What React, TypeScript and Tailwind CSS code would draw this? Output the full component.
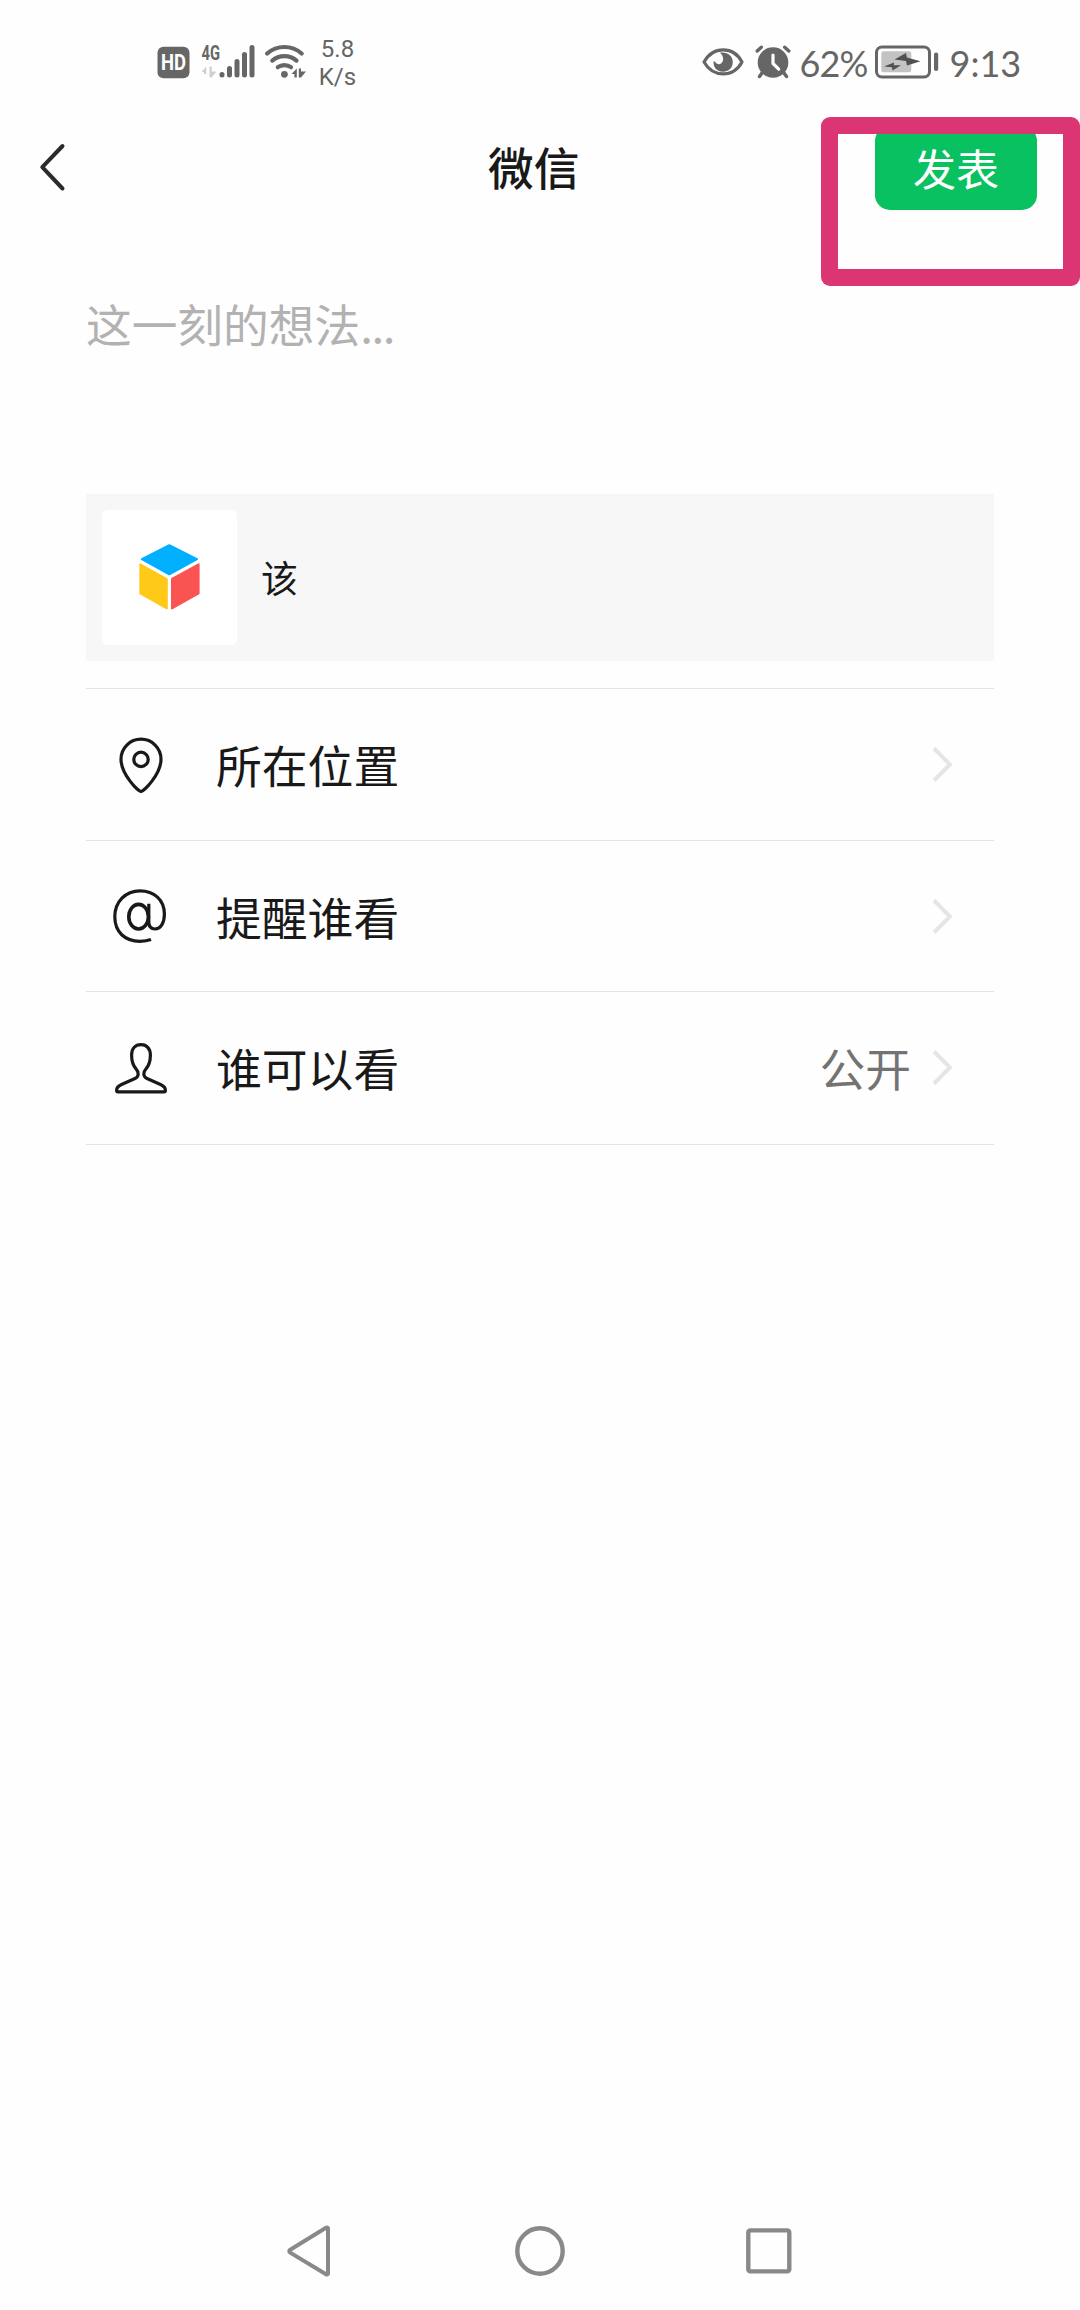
import React from 'react';

const Signal = () => (
    <svg className="w-[54px] h-[46px]" viewBox="0 -10 54 46" fill="none">
        <text x="0.5" y="17" fontFamily="Roboto" fontWeight="700" fontSize="21" textLength="18.5" lengthAdjust="spacingAndGlyphs" fill="#666">4G</text>
        <path d="M5.2 34.5V23.5L0.5 29H3V31H5.2ZM8.5 34.5V23.5H10.7V28.5H15.5L10.5 34.5Z" fill="#cfcfcf" />
        <g stroke="#666" strokeWidth="5" strokeLinecap="round">
            <path d="M21 32V31.5M28.5 32V25.5M36 32V18.5M43.5 32V11.5M51 32V4.5" />
        </g>
    </svg>
);

const Wifi = () => (
    <svg className="w-[42px] h-[36px]" viewBox="0 0 42 36" fill="none">
        <g stroke="#666" strokeWidth="4.2" strokeLinecap="round">
            <path d="M2.2 10.5C12 1.8 26.8 1.8 36.6 10.5" />
            <path d="M7.3 17.6C14.2 11.5 24.6 11.5 31.5 17.6" />
            <path d="M12.8 24.2C16.5 21.3 22.3 21.3 26 24.2" />
        </g>
        <circle cx="19.4" cy="31.3" r="3.4" fill="#666" />
        <path d="M26.5 31L31.8 25.5V34.5H29.4V31ZM33.8 34.5V25.5H36V28.5H41L36 34.5Z" fill="#666" />
    </svg>
);

const Eye = () => (
    <svg className="w-[42px] h-[28px]" viewBox="0 0 42 28" fill="none">
        <path d="M2 14C11 -2.3 31.5 -2.3 40 14C31.5 29.8 11 29.8 2 14Z" stroke="#666" strokeWidth="3.2" strokeLinejoin="round" />
        <path d="M18 4.8C25 3.6 30.8 8 30.8 14C30.8 19.8 26.5 23.8 21 23.8C15.2 23.8 11.2 19.5 11.5 13.8C12.2 13 12.8 13.3 13.2 14C15 17.3 20 16.8 21 12.5C21.6 9.5 20.5 7 18 4.8Z" fill="#666" />
    </svg>
);

const Alarm = () => (
    <svg className="w-[36px] h-[34px]" viewBox="0 0 36 34" fill="none">
        <circle cx="18" cy="17.5" r="15.3" fill="#666" />
        <path d="M2.2 6L6.3 2.2M33.8 6L29.7 2.2" stroke="#666" strokeWidth="3.4" strokeLinecap="round" />
        <path d="M7 28L4.5 31.5M29 28L31.5 31.5" stroke="#666" strokeWidth="3.4" strokeLinecap="round" />
        <path d="M18 10V18.5L23.7 24.2" stroke="#fefefe" strokeWidth="3.2" strokeLinecap="round" strokeLinejoin="round" />
    </svg>
);

const Battery = () => (
    <svg className="w-[64px] h-[34px]" viewBox="0 0 64 34" fill="none">
        <rect x="1.5" y="2" width="53" height="30" rx="5.5" stroke="#666" strokeWidth="3" />
        <rect x="6.3" y="6.3" width="30" height="21" rx="2.5" fill="#c3c3c3" />
        <path d="M9 21.5L19 17.5L18.8 20.2H26L17.5 25.5L17 22.2Z" fill="#505050" />
        <path d="M19.5 14.4L31 8L31.8 12.5L45.5 16.3L32 20.5L31 16Z" fill="#505050" />
        <rect x="59" y="7.5" width="4.2" height="18.5" rx="2.1" fill="#666" />
    </svg>
);

const StatusBar = () => (
    <div className="flex h-[117px] pl-[157px] text-[#666]">
        <svg className="mt-[46px] w-[33px] h-[33px]" viewBox="0 0 33 33">
            <rect x="0.5" y="0.7" width="32" height="31.5" rx="6" fill="#666" />
            <text x="4" y="24.3" fontFamily="Roboto" fontWeight="700" fontSize="21.5" textLength="25" lengthAdjust="spacingAndGlyphs" fill="#fefefe">HD</text>
        </svg>
        <div className="mt-[33px] ml-[10.5px]"><Signal /></div>
        <div className="mt-[43px] ml-[10px]"><Wifi /></div>
        <div className="mt-[35px] ml-[9px] w-[44px] text-center font-[Roboto,sans-serif] text-[24px] leading-[28px]">
            <div>5.8</div>
            <div>K/s</div>
        </div>
        <div className="mt-[48px] ml-[342px]"><Eye /></div>
        <div className="mt-[45px] ml-[11px]"><Alarm /></div>
        <div className="mt-[41px] ml-[9px] w-[75px] whitespace-nowrap font-[Lato,sans-serif] text-[36px] leading-[44px] tracking-[-0.9px]">62%</div>
        <div className="mt-[45px]"><Battery /></div>
        <div className="mt-[41px] ml-[11px] whitespace-nowrap font-[Lato,sans-serif] text-[36px] leading-[44px]">9:13</div>
    </div>
);

const PinIcon = () => (
    <svg className="w-[60px] h-[60px]" viewBox="0 0 60 60" fill="none" stroke="#191919" strokeWidth="3.2">
        <path d="M31 57.6C28.5 57.6 11 40.5 11 25.2A20 20 0 0 1 51 25.2C51 40.5 33.5 57.6 31 57.6Z" />
        <circle cx="31" cy="25.4" r="7.2" />
    </svg>
);

const AtIcon = () => (
    <svg className="w-[60px] h-[60px]" viewBox="0 0 60 60" fill="none" stroke="#191919" strokeWidth="3.2">
        <ellipse cx="28.6" cy="30.7" rx="9.8" ry="12.3" strokeWidth="3.6" />
        <path d="M38.8 17.8V36C38.8 40.5 41 43 45 43C51 43 54.4 36.5 54.4 28C54.4 14 44 4.8 30 4.8C15.5 4.8 4.8 15.8 4.8 30.8C4.8 46 15 55.3 29.8 55.3C34.5 55.3 38 54.8 41 53.6" />
    </svg>
);

const PersonIcon = () => (
    <svg className="w-[60px] h-[60px]" viewBox="0 0 60 60" fill="none" stroke="#191919" strokeWidth="3.2">
        <path d="M31 7.7C25 7.7 21.6 12 21.6 18C21.6 25 23 28.5 26 31.8C29.3 35.3 28.8 39.8 25 41.5L11.5 47.5C8 49 6.6 50.8 6.6 53.4C6.6 54.5 7.2 54.8 8 54.8H54C54.8 54.8 55.4 54.5 55.4 53.4C55.4 50.8 54 49 50.5 47.5L37 41.5C33.2 39.8 32.7 35.3 36 31.8C39 28.5 40.4 25 40.4 18C40.4 12 37 7.7 31 7.7Z" />
    </svg>
);

const CubeLogo = () => (
    <svg className="w-[135px] h-[135px]" viewBox="0 0 135 135" strokeWidth="2" strokeLinejoin="round">
        <path d="M67.3 35.2L95 49.2L67.3 64.4L39.8 49.2Z" fill="#00b0ff" stroke="#00b0ff" />
        <path d="M38.3 54.3L64.8 69V98.5L38.3 83.3Z" fill="#ffc917" stroke="#ffc917" />
        <path d="M70 69L96.6 54.3V83.3L70 98.5Z" fill="#fa5452" stroke="#fa5452" />
    </svg>
);

type RowProps = {
    icon: React.ReactNode;
    label: string;
    value?: string;
    className: string;
};

const Row: React.FC<RowProps> = ({ icon, label, value, className }) => (
    <div className={`flex border-b border-[#e4e4e4] pl-6 pr-[42px] pt-[45px] ${className}`}>
        {icon}
        <div className="ml-[46px] text-[45.8px] leading-[60px] text-[#191919]">{label}</div>
        <div className="ml-auto text-[45.8px] leading-[60px] text-[#737373]">{value}</div>
        <svg className="ml-[21px] mt-3 w-5 h-[37px]" viewBox="0 0 20 37" fill="none" stroke="#e5e5e5" strokeWidth="4">
            <path d="M2 2.5L18 18.5L2 34.5" />
        </svg>
    </div>
);

export default function App() {
    return (
        <div className="flex h-[2310px] w-[1080px] flex-col overflow-hidden bg-[#fefefe] font-['Noto_Sans_CJK_SC',sans-serif]">
            <StatusBar />

            {/* Title bar */}
            <div className="relative flex h-[169px]">
                <svg className="ml-[38px] mt-[25px] w-[30px] h-[50px]" viewBox="0 0 30 50" fill="none" stroke="#2b2b2b" strokeWidth="4" strokeLinecap="round" strokeLinejoin="round">
                    <path d="M24.5 4L4.3 25.2L24.5 46.5" />
                </svg>
                <h1 className="ml-[420px] mt-[19px] text-[45.7px] font-medium leading-[60px] text-[#191919]">微信</h1>
                <button className="ml-auto mr-[43px] mt-[9px] h-[84px] w-[162px] rounded-[15px] bg-[#09c160] text-[43px] leading-[82px] text-white pb-[2px]">发表</button>
                <div className="absolute right-0 top-0 h-[169px] w-[259px] rounded-[9px] bg-[#dc3574] [clip-path:polygon(evenodd,0_0,100%_0,100%_100%,0_100%,0_0,17px_17px,242px_17px,242px_152px,17px_152px,17px_17px)]" />
            </div>

            <div className="px-[86px]">
                <div className="h-[208px] pt-[7px] text-[45.7px] leading-[60px] text-[#b2b2b2]">
                    这一刻的想法<span className="tracking-[-1.4px]">...</span>
                </div>

                {/* Shared link */}
                <div className="flex h-[167px] items-center bg-[#f7f7f7] pl-4">
                    <div className="rounded-md bg-white"><CubeLogo /></div>
                    <div className="ml-6 text-[37px] leading-none text-[#191919]">该</div>
                </div>

                <div className="mt-[27px] border-t border-[#e4e4e4]">
                    <Row className="h-[152px]" icon={<PinIcon />} label="所在位置" />
                    <Row className="h-[151px]" icon={<AtIcon />} label="提醒谁看" />
                    <Row className="h-[153px]" icon={<PersonIcon />} label="谁可以看" value="公开" />
                </div>
            </div>

            {/* Navigation keys */}
            <div className="mt-auto flex h-[86px] justify-between pl-[285px] pr-[286px]">
                <svg className="w-[48px] h-[54px]" viewBox="0 0 48 54" fill="none" stroke="#898989" strokeWidth="4" strokeLinejoin="round">
                    <path d="M43 4.6C43 3.6 42 3.2 41 3.8L5.2 25.7C4 26.5 4 27.8 5.2 28.6L41 50.2C42 50.8 43 50.4 43 49.4Z" />
                </svg>
                <svg className="w-[54px] h-[54px]" viewBox="0 0 54 54" fill="none" stroke="#898989" strokeWidth="4.4">
                    <circle cx="28" cy="27" r="22.7" />
                </svg>
                <svg className="w-[50px] h-[54px]" viewBox="0 0 50 54" fill="none" stroke="#898989" strokeWidth="4.4">
                    <rect x="4.3" y="6.4" width="41" height="41" rx="2" />
                </svg>
            </div>
        </div>
    );
}
